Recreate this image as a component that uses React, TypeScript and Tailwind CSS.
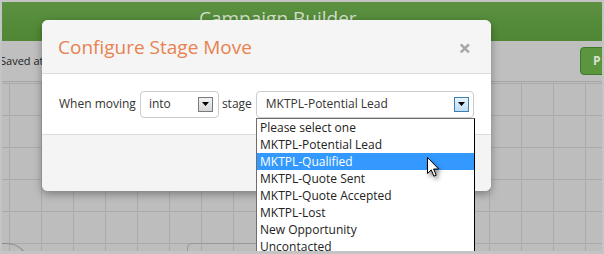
import React from "react";

function ArrowBox({ blue }: { blue?: boolean }) {
  return (
    <div
      className={
        blue
          ? "flex h-[15px] w-[15px] items-center justify-center border border-[#3c7fb1] bg-gradient-to-b from-[#e8f3fc] to-[#bfdcf4]"
          : "flex h-[15px] w-[15px] items-center justify-center border border-[#7a7a7a] bg-gradient-to-b from-[#f2f2f2] to-[#d6d6d6]"
      }
    >
      <svg width="7" height="4" viewBox="0 0 7 4">
        <path d="M0 0 L7 0 L3.5 4 Z" fill="#000" />
      </svg>
    </div>
  );
}

const options = [
  "Please select one",
  "MKTPL-Potential Lead",
  "MKTPL-Qualified",
  "MKTPL-Quote Sent",
  "MKTPL-Quote Accepted",
  "MKTPL-Lost",
  "New Opportunity",
  "Uncontacted",
];

export default function App() {
  return (
    <div className="h-[254px] w-[604px] bg-[#c4c4c4] pb-[3px] pl-[2px] pr-[2px] pt-[2px] font-['Open_Sans',sans-serif]">
      <div className="relative flex h-full w-full flex-col overflow-hidden bg-[#bdbdbd]">
        {/* green header */}
        <div className="h-[39px] shrink-0 bg-gradient-to-b from-[#5b9140] to-[#4f8735] pl-[197px] pt-[3px] text-[19px] leading-[26px] text-[#d3dfcb]">
          Campaign Builder
        </div>
        {/* toolbar */}
        <div className="flex h-[41px] shrink-0 items-center justify-between border-b border-[#a6a6a6] bg-[#bfbfbf]">
          <span className="ml-[-2px] text-[11px] text-[#222]">Saved at</span>
          <div className="mr-[-20px] flex h-[28px] w-[42px] items-center rounded-[4px] border border-[#3e7829] bg-[#5b953d] pl-[12px] text-[12px] font-bold text-[#d8e3d1]">
            P
          </div>
        </div>
        {/* canvas grid */}
        <div className="flex-1 bg-[#bdbdbd] bg-[linear-gradient(to_right,#aaaaaa_1px,transparent_1px),linear-gradient(to_bottom,#aaaaaa_1px,transparent_1px)] bg-[length:32px_32px] bg-[position:7px_1px]" />

        {/* canvas nodes peeking at bottom */}
        <div className="absolute left-[-50px] top-[241px] h-[40px] w-[77px] rounded-tr-[22px] border-r border-t border-[#8c8c8c]" />
        <div className="absolute left-[185px] top-[241px] h-[40px] w-[120px] rounded-tl-[5px] border-l border-t border-[#999999]" />

        {/* modal */}
        <div className="absolute left-[40px] top-[18px] flex h-[171px] w-[449px] flex-col overflow-hidden rounded-[6px] bg-[#f4f4f4] shadow-[0_3px_9px_rgba(0,0,0,0.35)]">
          <div className="flex h-[54px] shrink-0 items-center justify-between border-b border-[#dddddd] bg-[#f5f5f5] pl-[16px] pr-[20px]">
            <span className="text-[19px] leading-[28px] text-[#e8824f]">Configure Stage Move</span>
            <span className="text-[22px] font-bold leading-[22px] text-[#a6a6a6]">×</span>
          </div>
          <div className="flex h-[61px] shrink-0 items-center border-b border-[#dddddd] bg-white pl-[17px] text-[12px] text-[#333]">
            <span>When moving</span>
            <div className="ml-[4px] flex h-[27px] w-[79px] items-center justify-between rounded-[4px] border border-[#cccccc] bg-white pl-[8px] pr-[5px]">
              <span>into</span>
              <ArrowBox />
            </div>
            <span className="ml-[3px]">stage</span>
            <div className="ml-[4px] flex h-[27px] w-[218px] items-center justify-between rounded-[4px] border border-[#cccccc] bg-white pl-[9px] pr-[4px]">
              <span>MKTPL-Potential Lead</span>
              <ArrowBox blue />
            </div>
          </div>
          <div className="flex-1 bg-[#f4f4f4]" />
        </div>

        {/* dropdown list */}
        <div className="absolute left-[254px] top-[116px] w-[219px] border border-[#6e6e6e] border-r-black bg-white text-[12px] text-[#222]">
          {options.map((o) => (
            <div
              key={o}
              className={
                o === "MKTPL-Qualified"
                  ? "h-[17px] bg-[#3399ff] pl-[3px] leading-[17px] text-white"
                  : "h-[17px] pl-[3px] leading-[17px]"
              }
            >
              {o}
            </div>
          ))}
        </div>

        {/* mouse cursor */}
        <svg
          className="absolute left-[425px] top-[155px] drop-shadow-[2px_3px_2px_rgba(0,0,0,0.45)]"
          width="14"
          height="21"
          viewBox="0 0 14 21"
        >
          <path
            d="M0.5 0.5 L0.5 16.5 L4.3 12.9 L6.9 19.2 L9.2 18.2 L6.6 12 L11.7 12 Z"
            fill="#fff"
            stroke="#000"
            strokeWidth="1"
            strokeLinejoin="miter"
          />
        </svg>
      </div>
    </div>
  );
}
